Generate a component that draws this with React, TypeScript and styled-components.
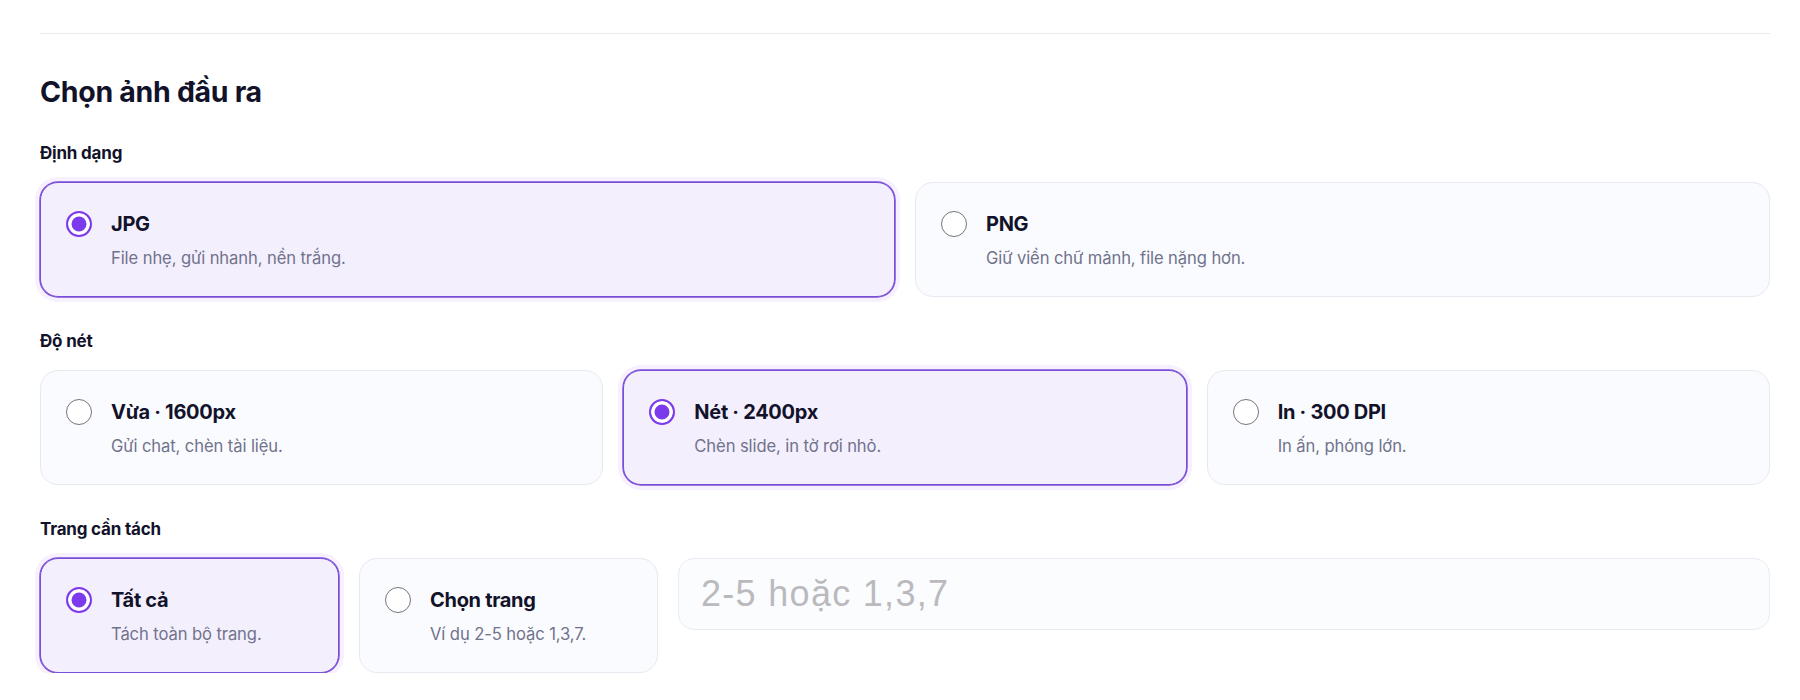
import React, { useState } from "react";
import styled, { createGlobalStyle, css } from "styled-components";

const GlobalStyle = createGlobalStyle`
  * { box-sizing: border-box; }
  body {
    margin: 0;
    background: #ffffff;
    font-family: Inter, "Noto Sans", sans-serif;
    color: #14152b;
  }
`;

const Page = styled.div`
  padding: 0 30px 0 40px;
`;

const Divider = styled.hr`
  margin: 33px 0 0;
  border: 0;
  height: 1px;
  background: #e9eaf0;
`;

const Title = styled.h2`
  margin: 41px 0 0;
  font-size: 28.5px;
  line-height: 34px;
  font-weight: 700;
  letter-spacing: -0.3px;
  color: #12132a;
`;

const GroupLabel = styled.div`
  margin-top: 33px;
  font-size: 17px;
  line-height: 22px;
  font-weight: 700;
  letter-spacing: -0.2px;
  color: #12132a;
`;

const OptionGrid = styled.div<{ $cols: string }>`
  margin-top: 18px;
  display: grid;
  grid-template-columns: ${(p) => p.$cols};
  gap: 20px;
  align-items: start;
`;

const OptionCard = styled.label<{ $selected: boolean }>`
  display: grid;
  grid-template-columns: 26px 1fr;
  column-gap: 19px;
  padding: 28px 24px 27px 25px;
  border-radius: 18px;
  border: 1px solid #e7e9f1;
  background: #fafbfe;
  cursor: pointer;
  ${(p) =>
    p.$selected &&
    css`
      border-color: #7a4fd8;
      background: #f4effd;
      box-shadow: 0 0 0 0.75px #7a4fd8, 0 0 0 5px #f6f0ff;
    `}
`;

const Radio = styled.input.attrs({ type: "radio" })`
  appearance: none;
  margin: 0;
  width: 26px;
  height: 26px;
  border-radius: 50%;
  border: 1.5px solid #75757c;
  background: #ffffff;
  align-self: center;
  grid-row: 1;
  grid-column: 1;
  cursor: pointer;
  &:checked {
    border: 2px solid #7c3aed;
    background: #7c3aed;
    box-shadow: inset 0 0 0 3.5px #ffffff;
  }
`;

const OptionTitle = styled.span`
  grid-row: 1;
  grid-column: 2;
  font-size: 20px;
  line-height: 26px;
  font-weight: 700;
  letter-spacing: -0.3px;
  color: #12132a;
`;

const OptionDesc = styled.span`
  grid-row: 2;
  grid-column: 2;
  margin-top: 10px;
  font-size: 16.6px;
  line-height: 22px;
  font-weight: 400;
  letter-spacing: -0.1px;
  color: #70738c;
`;

const PageInput = styled.input`
  height: 72px;
  width: 100%;
  padding: 0 22px;
  border-radius: 16px;
  border: 1px solid #eaecf3;
  background: #fbfcfe;
  font-family: "Liberation Sans", Arial, sans-serif;
  font-size: 36px;
  letter-spacing: 1.3px;
  color: #14152b;
  outline: none;
  &::placeholder {
    color: #bababe;
  }
`;

type Opt = { id: string; title: string; desc: string };

const formats: Opt[] = [
  { id: "jpg", title: "JPG", desc: "File nhẹ, gửi nhanh, nền trắng." },
  { id: "png", title: "PNG", desc: "Giữ viền chữ mảnh, file nặng hơn." },
];

const qualities: Opt[] = [
  { id: "mid", title: "Vừa · 1600px", desc: "Gửi chat, chèn tài liệu." },
  { id: "sharp", title: "Nét · 2400px", desc: "Chèn slide, in tờ rơi nhỏ." },
  { id: "print", title: "In · 300 DPI", desc: "In ấn, phóng lớn." },
];

const pageModes: Opt[] = [
  { id: "all", title: "Tất cả", desc: "Tách toàn bộ trang." },
  { id: "pick", title: "Chọn trang", desc: "Ví dụ 2-5 hoặc 1,3,7." },
];

function Option({
  opt,
  name,
  value,
  onChange,
}: {
  opt: Opt;
  name: string;
  value: string;
  onChange: (v: string) => void;
}) {
  const selected = value === opt.id;
  return (
    <OptionCard $selected={selected}>
      <Radio name={name} checked={selected} onChange={() => onChange(opt.id)} />
      <OptionTitle>{opt.title}</OptionTitle>
      <OptionDesc>{opt.desc}</OptionDesc>
    </OptionCard>
  );
}

export default function App() {
  const [format, setFormat] = useState("jpg");
  const [quality, setQuality] = useState("sharp");
  const [mode, setMode] = useState("all");
  const [pages, setPages] = useState("");

  return (
    <>
      <GlobalStyle />
      <Page>
        <Divider />
        <Title>Chọn ảnh đầu ra</Title>

        <GroupLabel>Định dạng</GroupLabel>
        <OptionGrid $cols="repeat(2, 1fr)">
          {formats.map((o) => (
            <Option key={o.id} opt={o} name="format" value={format} onChange={setFormat} />
          ))}
        </OptionGrid>

        <GroupLabel>Độ nét</GroupLabel>
        <OptionGrid $cols="repeat(3, 1fr)">
          {qualities.map((o) => (
            <Option key={o.id} opt={o} name="quality" value={quality} onChange={setQuality} />
          ))}
        </OptionGrid>

        <GroupLabel>Trang cần tách</GroupLabel>
        <OptionGrid $cols="299px 299px 1fr">
          {pageModes.map((o) => (
            <Option key={o.id} opt={o} name="mode" value={mode} onChange={setMode} />
          ))}
          <PageInput
            placeholder="2-5 hoặc 1,3,7"
            value={pages}
            onChange={(e) => setPages(e.target.value)}
          />
        </OptionGrid>
      </Page>
    </>
  );
}
